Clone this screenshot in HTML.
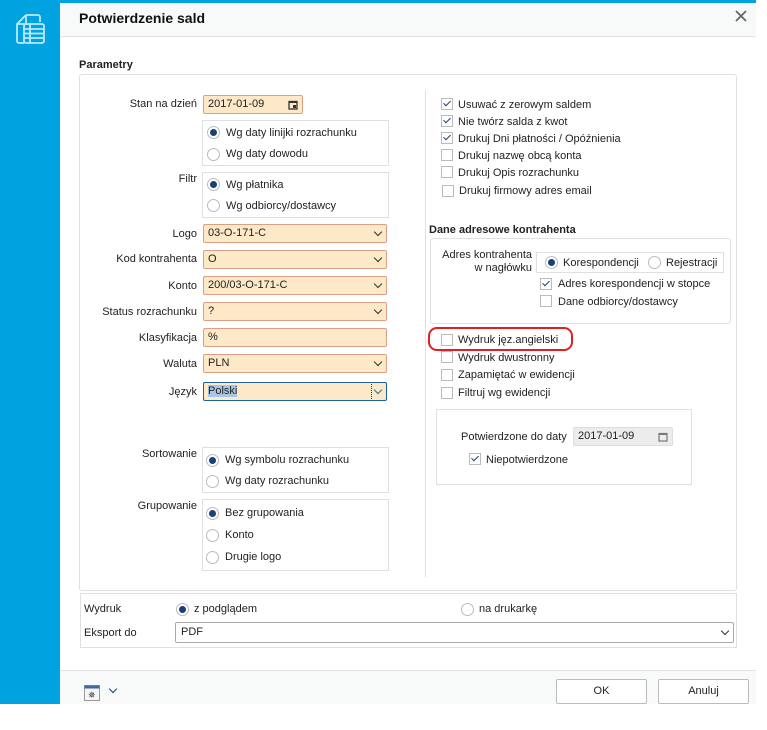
<!DOCTYPE html>
<html><head><meta charset="utf-8"><style>
*{box-sizing:border-box;margin:0;padding:0}
body{width:767px;height:730px;background:#fff;position:relative;overflow:hidden;font-family:"Liberation Sans",sans-serif;font-size:11px;color:#222}
.a{position:absolute}
.side{left:0;top:0;width:60px;height:704px;background:#00a2e0}
.topbar{left:60px;top:0;width:696px;height:3px;background:#00a2e0}
.dlg{left:60px;top:3px;width:696px;height:701px;background:#fff}
.hdr{left:60px;top:3px;width:696px;height:34px;background:#f8f9f9;border-bottom:1px solid #e2e4e4}
.ftr{left:60px;top:670px;width:696px;height:34px;background:#f8f9f9;border-top:1px solid #e2e4e4}
.box{border:1px solid #e0e0e0;background:#fff}
.lbl{text-align:right;width:120px}
.inp{height:19px;background:#fde8c8;border:1px solid #d9a085;border-radius:2px;padding:0 4px;line-height:17px}
.chev{position:absolute;right:5px;top:4px;width:6px;height:6px;border-right:1.5px solid #333;border-bottom:1.5px solid #333;transform:rotate(45deg)}
.rad{position:absolute;width:13px;height:13px;border:1px solid #bbb;border-radius:50%;background:#fff}
.rad.on::after{content:"";position:absolute;left:2px;top:2px;width:7px;height:7px;border-radius:50%;background:#1b3f7a}
.cb{position:absolute;width:12px;height:12px;border:1px solid #bbb;background:#fff}
.cb.on::after{content:"";position:absolute;left:3px;top:0px;width:3px;height:6px;border-right:1.5px solid #1b3f7a;border-bottom:1.5px solid #1b3f7a;transform:rotate(45deg)}
.btn{border:1px solid #bbb;border-radius:2px;background:#fff;text-align:center;line-height:22px;font-size:11px}
</style></head><body>
<div class="a side"></div>
<svg class="a" style="left:14px;top:13px" width="32" height="32" viewBox="0 0 32 32" fill="none" stroke="#bfe8f8" stroke-width="1.8"><path d="M12 2H24a2 2 0 0 1 2 2V9M12 2 3 11V28a2 2 0 0 0 2 2H10M12 2V11H3"/><rect x="10" y="11" width="20" height="19" rx="2"/><path d="M10 16H30M10 20.5H30M10 25H30M16 11V30"/></svg>
<div class="a topbar"></div>
<div class="a dlg"></div>
<div class="a hdr"></div>
<div class="a" style="left:79px;top:10px;font-size:14px;font-weight:bold;color:#111">Potwierdzenie sald</div>
<svg class="a" style="left:735px;top:10px" width="12" height="12"><path d="M1 1L11 11M11 1L1 11" stroke="#666" stroke-width="1.8"/></svg>
<div class="a" style="left:79px;top:59px;font-weight:bold">Parametry</div>
<div class="a box" style="left:79px;top:74px;width:658px;height:517px;border-radius:3px"></div>
<div class="a" style="left:425px;top:90px;width:1px;height:487px;background:#e0e0e0"></div>

<div class="a lbl" style="left:77px;top:98px">Stan na dzień</div>
<div class="a inp" style="left:203px;top:95px;width:100px">2017-01-09<svg style="position:absolute;right:4px;top:4px" width="10" height="10"><rect x="1" y="1.5" width="8" height="7.5" fill="none" stroke="#333" stroke-width="1.3"/><rect x="1" y="1" width="8" height="2" fill="#333"/><rect x="5" y="5" width="3" height="3" fill="#333"/></svg></div>
<div class="a box" style="left:202px;top:120px;width:187px;height:46px"></div>
<div class="a rad on" style="left:207px;top:126px"></div><div class="a" style="left:226px;top:127px">Wg daty linijki rozrachunku</div>
<div class="a rad" style="left:207px;top:148px"></div><div class="a" style="left:226px;top:148px">Wg daty dowodu</div>
<div class="a lbl" style="left:77px;top:173px">Filtr</div>
<div class="a box" style="left:202px;top:172px;width:187px;height:46px"></div>
<div class="a rad on" style="left:207px;top:178px"></div><div class="a" style="left:226px;top:179px">Wg płatnika</div>
<div class="a rad" style="left:207px;top:199px"></div><div class="a" style="left:226px;top:200px">Wg odbiorcy/dostawcy</div>

<div class="a lbl" style="left:77px;top:228px">Logo</div>
<div class="a inp" style="left:203px;top:224px;width:184px">03-O-171-C<i class="chev"></i></div>
<div class="a lbl" style="left:77px;top:253px">Kod kontrahenta</div>
<div class="a inp" style="left:203px;top:250px;width:184px">O<i class="chev"></i></div>
<div class="a lbl" style="left:77px;top:280px">Konto</div>
<div class="a inp" style="left:203px;top:276px;width:184px">200/03-O-171-C<i class="chev"></i></div>
<div class="a lbl" style="left:77px;top:306px">Status rozrachunku</div>
<div class="a inp" style="left:203px;top:302px;width:184px">?<i class="chev"></i></div>
<div class="a lbl" style="left:77px;top:332px">Klasyfikacja</div>
<div class="a inp" style="left:203px;top:328px;width:184px">%</div>
<div class="a lbl" style="left:77px;top:358px">Waluta</div>
<div class="a inp" style="left:203px;top:354px;width:184px">PLN<i class="chev"></i></div>
<div class="a lbl" style="left:77px;top:386px">Język</div>
<div class="a inp" style="left:203px;top:382px;width:184px;border-color:#1e5fa0"><span style="background:#a9c6e4">Polski</span><span style="position:absolute;right:14px;top:1px;height:15px;border-left:1px dotted #333"></span><i class="chev" style="border-color:#1e6fb0"></i></div>

<div class="a lbl" style="left:77px;top:448px">Sortowanie</div>
<div class="a box" style="left:202px;top:447px;width:187px;height:46px"></div>
<div class="a rad on" style="left:206px;top:454px"></div><div class="a" style="left:225px;top:454px">Wg symbolu rozrachunku</div>
<div class="a rad" style="left:206px;top:475px"></div><div class="a" style="left:225px;top:475px">Wg daty rozrachunku</div>
<div class="a lbl" style="left:77px;top:500px">Grupowanie</div>
<div class="a box" style="left:202px;top:499px;width:187px;height:72px"></div>
<div class="a rad on" style="left:206px;top:507px"></div><div class="a" style="left:225px;top:507px">Bez grupowania</div>
<div class="a rad" style="left:206px;top:529px"></div><div class="a" style="left:225px;top:529px">Konto</div>
<div class="a rad" style="left:206px;top:551px"></div><div class="a" style="left:225px;top:551px">Drugie logo</div>

<div class="a cb on" style="left:441px;top:98px"></div><div class="a" style="left:458px;top:99px">Usuwać z zerowym saldem</div>
<div class="a cb on" style="left:441px;top:115px"></div><div class="a" style="left:458px;top:116px">Nie twórz salda z kwot</div>
<div class="a cb on" style="left:441px;top:132px"></div><div class="a" style="left:458px;top:133px">Drukuj Dni płatności / Opóźnienia</div>
<div class="a cb" style="left:441px;top:149px"></div><div class="a" style="left:458px;top:150px">Drukuj nazwę obcą konta</div>
<div class="a cb" style="left:441px;top:166px"></div><div class="a" style="left:458px;top:167px">Drukuj Opis rozrachunku</div>
<div class="a cb" style="left:442px;top:185px"></div><div class="a" style="left:459px;top:185px">Drukuj firmowy adres email</div>

<div class="a" style="left:429px;top:224px;font-weight:bold">Dane adresowe kontrahenta</div>
<div class="a box" style="left:430px;top:238px;width:301px;height:86px;border-radius:3px"></div>
<div class="a" style="left:430px;top:249px;width:102px;text-align:right;line-height:13px">Adres kontrahenta<br>w nagłówku</div>
<div class="a box" style="left:536px;top:252px;width:188px;height:21px"></div>
<div class="a rad on" style="left:545px;top:256px"></div><div class="a" style="left:563px;top:257px">Korespondencji</div>
<div class="a rad" style="left:648px;top:256px"></div><div class="a" style="left:666px;top:257px">Rejestracji</div>
<div class="a cb on" style="left:540px;top:278px"></div><div class="a" style="left:558px;top:278px">Adres korespondencji w stopce</div>
<div class="a cb" style="left:540px;top:295px"></div><div class="a" style="left:558px;top:296px">Dane odbiorcy/dostawcy</div>

<div class="a" style="left:428px;top:327px;width:145px;height:24px;border:2.5px solid #e02020;border-radius:9px"></div>
<div class="a cb" style="left:441px;top:334px"></div><div class="a" style="left:458px;top:334px">Wydruk jęz.angielski</div>
<div class="a cb" style="left:441px;top:351px"></div><div class="a" style="left:458px;top:352px">Wydruk dwustronny</div>
<div class="a cb" style="left:441px;top:369px"></div><div class="a" style="left:458px;top:369px">Zapamiętać w ewidencji</div>
<div class="a cb" style="left:441px;top:387px"></div><div class="a" style="left:458px;top:387px">Filtruj wg ewidencji</div>
<div class="a box" style="left:436px;top:409px;width:256px;height:76px"></div>
<div class="a" style="left:461px;top:431px">Potwierdzone do daty</div>
<div class="a" style="left:573px;top:427px;width:100px;height:19px;background:#ececec;border:1px solid #ddd;border-radius:2px;padding:0 4px;line-height:17px">2017-01-09<svg style="position:absolute;right:4px;top:4px" width="10" height="10"><rect x="1" y="1.5" width="8" height="7.5" fill="none" stroke="#777" stroke-width="1.2"/><rect x="1" y="1" width="8" height="2" fill="#777"/></svg></div>
<div class="a cb on" style="left:469px;top:453px"></div><div class="a" style="left:486px;top:454px">Niepotwierdzone</div>

<div class="a box" style="left:80px;top:593px;width:657px;height:55px"></div>
<div class="a" style="left:84px;top:603px">Wydruk</div>
<div class="a rad on" style="left:176px;top:603px"></div><div class="a" style="left:194px;top:603px">z podglądem</div>
<div class="a rad" style="left:461px;top:603px"></div><div class="a" style="left:479px;top:603px">na drukarkę</div>
<div class="a" style="left:84px;top:627px">Eksport do</div>
<div class="a" style="left:175px;top:622px;width:559px;height:21px;border:1px solid #aaa;border-radius:2px;padding:0 5px;line-height:19px">PDF<i class="chev" style="top:5px"></i></div>

<div class="a ftr"></div>
<svg class="a" style="left:84px;top:685px" width="17" height="16"><rect x="0.5" y="0.5" width="15" height="15" fill="#f4f4f4" stroke="#999"/><rect x="0.5" y="0.5" width="15" height="3" fill="#3c6aa8"/><text x="4" y="13" font-size="9" fill="#333" font-family="Liberation Sans">✵</text></svg>
<div class="a" style="left:110px;top:686px;width:6px;height:6px;border-right:1.5px solid #1b3f7a;border-bottom:1.5px solid #1b3f7a;transform:rotate(45deg)"></div>
<div class="a btn" style="left:556px;top:679px;width:91px;height:25px">OK</div>
<div class="a btn" style="left:658px;top:679px;width:91px;height:25px">Anuluj</div>
</body></html>
